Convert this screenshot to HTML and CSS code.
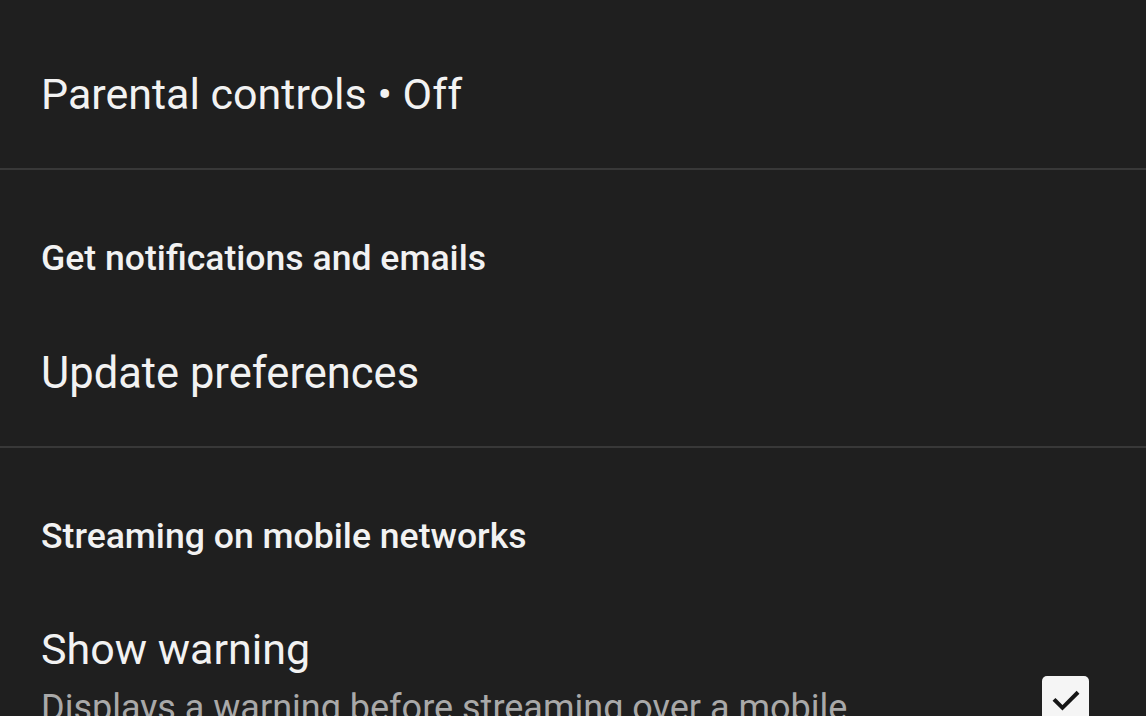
FILE: index.html
```html
<!DOCTYPE html>
<html>
<head>
<meta charset="utf-8">
<link rel="stylesheet" href="styles.css">
</head>
<body>
<div class="page">
  <section class="section first">
    <div class="item-title parental">Parental controls • Off</div>
  </section>
  <section class="section">
    <div class="section-header">Get notifications and emails</div>
    <div class="item-title update">Update preferences</div>
  </section>
  <section class="section last">
    <div class="section-header">Streaming on mobile networks</div>
    <div class="row">
      <div class="row-text">
        <div class="item-title show">Show warning</div>
        <div class="item-desc">Displays a warning before streaming over a mobile network</div>
      </div>
      <div class="checkbox">
        <svg viewBox="0 0 24 24" width="34" height="34"><path d="M4.5 12.5l5 5L19.5 7.5" fill="none" stroke="#161616" stroke-width="2.8" stroke-linecap="square"/></svg>
      </div>
    </div>
  </section>
</div>
</body>
</html>
```

FILE: styles.css
```css
html, body {
  margin: 0;
  padding: 0;
  background: #1f1f1f;
  overflow: hidden;
}
.page {
  width: 1146px;
  height: 716px;
  font-family: Roboto, "Noto Sans", sans-serif;
  color: #f2f2f2;
}
.section {
  border-bottom: 2px solid #383838;
  padding: 0 41px;
}
.section.last {
  border-bottom: none;
}
.section.first {
  height: 170px;
  box-sizing: border-box;
  padding-top: 70px;
}
.item-title {
  font-size: 43px;
  line-height: 48px;
  font-weight: 400;
}
.section-header {
  font-size: 35.6px;
  line-height: 44px;
  font-weight: 500;
  padding-top: 66px;
}
.item-title.update {
  font-size: 43.5px;
  line-height: 50px;
  padding-top: 69px;
  padding-bottom: 47px;
}
.row {
  display: flex;
  align-items: flex-start;
  justify-content: space-between;
  padding-top: 66px;
}
.row-text {
  width: 880px;
}
.item-title.show {
  font-size: 43px;
  line-height: 50px;
}
.item-desc {
  font-size: 36px;
  line-height: 44px;
  color: #a9a9a9;
  margin-top: 12px;
}
.checkbox {
  width: 47px;
  height: 47px;
  background: #f5f5f5;
  border-radius: 5px;
  display: flex;
  align-items: center;
  justify-content: center;
  margin-top: 52px;
  margin-right: 16px;
}
```
